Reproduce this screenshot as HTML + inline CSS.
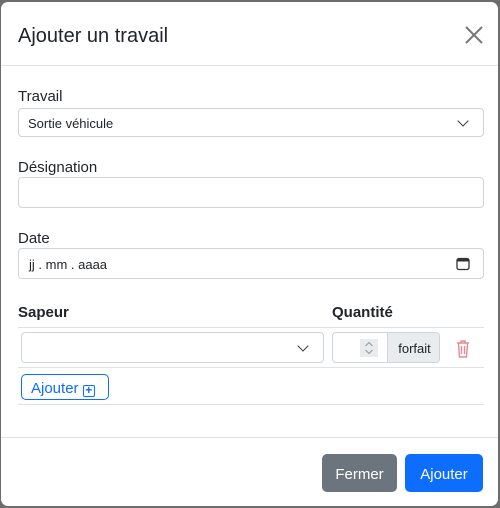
<!DOCTYPE html>
<html><head><meta charset="utf-8"><style>
*{box-sizing:border-box}
body{margin:0;width:500px;height:508px;background:#6d6d6d;font-family:"Liberation Sans",sans-serif;color:#212529;position:relative;overflow:hidden}
.m{position:absolute;left:1px;top:2px;width:497px;height:504px;background:#fff;border-radius:7px}
.a{position:absolute}
.lbl{font-size:15px}
.in{position:absolute;left:17px;width:466px;border:1px solid #ced4da;border-radius:4px;background:#fff}
.chev{position:absolute;width:8px;height:8px;border-right:1.6px solid #343a40;border-bottom:1.6px solid #343a40;transform:rotate(45deg)}
.btn{display:flex;align-items:center;justify-content:center;padding-top:2px}
</style></head><body>
<div class="m">
<div class="a" style="left:17px;top:23px;font-size:20px">Ajouter un travail</div>
<svg class="a" style="left:464px;top:24px" width="18" height="18"><path d="M1 1L17 17M17 1L1 17" stroke="#777" stroke-width="2"/></svg>
<div class="a" style="left:0;top:63px;width:497px;height:1px;background:#dee2e6"></div>

<div class="a lbl" style="left:17px;top:86px">Travail</div>
<div class="in" style="top:106px;height:29px"><span class="a" style="left:9px;top:7px;font-size:13px">Sortie véhicule</span><div class="chev" style="right:16px;top:8px"></div></div>

<div class="a lbl" style="left:17px;top:157px">Désignation</div>
<div class="in" style="top:175px;height:31px"></div>

<div class="a lbl" style="left:17px;top:228px">Date</div>
<div class="in" style="top:246px;height:31px"><span class="a" style="left:10px;top:8px;font-size:13px">jj . mm . aaaa</span>
<svg class="a" style="right:13px;top:8px" width="14" height="14"><rect x="1" y="1.5" width="12" height="11" rx="2" fill="none" stroke="#333" stroke-width="1.3"/><rect x="1" y="1.5" width="12" height="3" fill="#333"/></svg></div>

<div class="a" style="left:17px;top:302px;font-size:15px;font-weight:bold">Sapeur</div>
<div class="a" style="left:331px;top:302px;font-size:15px;font-weight:bold">Quantité</div>
<div class="a" style="left:17px;top:325px;width:466px;height:1px;background:#dee2e6"></div>

<div class="a" style="left:20px;top:330px;width:303px;height:31px;border:1px solid #ced4da;border-radius:4px"><div class="chev" style="right:16px;top:9px"></div></div>
<div class="a" style="left:331px;top:330px;width:108px;height:31px;border:1px solid #ced4da;border-radius:4px;overflow:hidden">
<div class="a" style="left:27px;top:6px;width:18px;height:18px;background:#e9ecef"></div>
<svg class="a" style="left:31px;top:8px" width="10" height="14"><path d="M1.5 5L5 1.5L8.5 5M1.5 9L5 12.5L8.5 9" fill="none" stroke="#999" stroke-width="1.1"/></svg>
<div class="a" style="left:54px;top:0;width:54px;height:31px;background:#e9ecef;border-left:1px solid #ced4da;font-size:13px;line-height:31px;text-align:center">forfait</div></div>
<svg class="a" style="left:455px;top:338px" width="14" height="18"><path d="M1 3H13M5 3V1H9V3M2.5 3.5L3.5 17H10.5L11.5 3.5M5.5 6V14M8.5 6V14" fill="none" stroke="#e38a93" stroke-width="1.4"/></svg>
<div class="a" style="left:17px;top:365px;width:466px;height:1px;background:#dee2e6"></div>

<div class="a" style="left:20px;top:372px;width:88px;height:26px;border:1px solid #0d6efd;border-radius:5px;color:#0d6efd;font-size:15px;padding:5px 0 0 9px">Ajouter <span style="display:inline-block;width:12px;height:12px;border:1.5px solid #0d6efd;border-radius:2px;font-size:12px;line-height:9px;text-align:center;font-weight:bold;vertical-align:-1px">+</span></div>
<div class="a" style="left:17px;top:402px;width:466px;height:1px;background:#dee2e6"></div>

<div class="a" style="left:0;top:435px;width:497px;height:1px;background:#dee2e6"></div>
<div class="a btn" style="left:321px;top:452px;width:75px;height:38px;background:#6c757d;border-radius:5px;color:#fff;font-size:15px">Fermer</div>
<div class="a btn" style="left:404px;top:452px;width:78px;height:38px;background:#0d6efd;border-radius:5px;color:#fff;font-size:15px">Ajouter</div>
</div>
</body></html>
